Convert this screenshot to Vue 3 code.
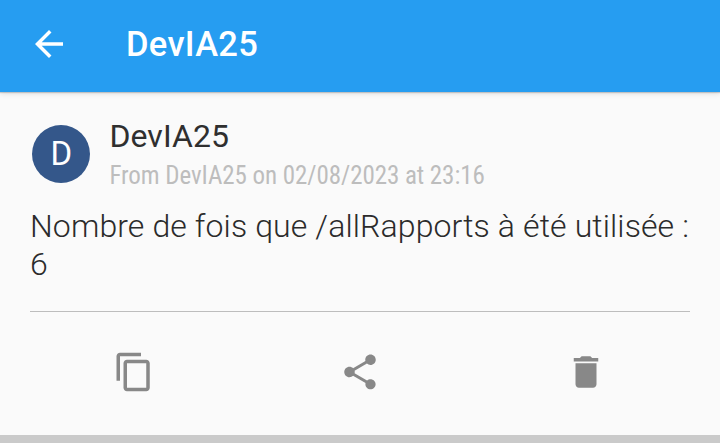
<script setup>
const title = 'DevIA25'
const meta = 'From DevIA25 on 02/08/2023 at 23:16'
const message = 'Nombre de fois que /allRapports à été utilisée : 6'
const actions = [
  { label: 'Copy', path: 'M16 1H4c-1.1 0-2 .9-2 2v14h2V3h12V1zm3 4H8c-1.1 0-2 .9-2 2v14c0 1.1.9 2 2 2h11c1.1 0 2-.9 2-2V7c0-1.1-.9-2-2-2zm0 16H8V7h11v14z' },
  { label: 'Share', path: 'M18 16.08c-.76 0-1.44.3-1.96.77L8.91 12.7c.05-.23.09-.46.09-.7s-.04-.47-.09-.7l7.05-4.11c.54.5 1.25.81 2.04.81 1.66 0 3-1.34 3-3s-1.34-3-3-3-3 1.34-3 3c0 .24.04.47.09.7L8.04 9.81C7.5 9.31 6.79 9 6 9c-1.66 0-3 1.34-3 3s1.34 3 3 3c.79 0 1.5-.31 2.04-.81l7.12 4.16c-.05.21-.08.43-.08.65 0 1.61 1.31 2.92 2.92 2.92 1.61 0 2.92-1.31 2.92-2.92s-1.31-2.92-2.92-2.92z' },
  { label: 'Delete', path: 'M6 19c0 1.1.9 2 2 2h8c1.1 0 2-.9 2-2V7H6v12zM19 4h-3.5l-1-1h-5l-1 1H5v2h14V4z' },
]
</script>

<template>
  <div class="screen">
    <header class="bar">
      <svg class="icon back" viewBox="0 0 24 24"><path d="M20 11H7.83l5.59-5.59L12 4l-8 8 8 8 1.41-1.41L7.83 13H20v-2z" /></svg>
      <h1 class="title">{{ title }}</h1>
    </header>
    <main class="body">
      <section class="sender">
        <div class="avatar">D</div>
        <div class="who">
          <div class="name">{{ title }}</div>
          <div class="meta">{{ meta }}</div>
        </div>
      </section>
      <p class="message">{{ message }}</p>
    </main>
    <nav class="actions">
      <button v-for="a in actions" :key="a.label" class="action" :aria-label="a.label">
        <svg class="icon" viewBox="0 0 24 24"><path :d="a.path" /></svg>
      </button>
    </nav>
    <footer class="foot"></footer>
  </div>
</template>

<style>
body { margin: 0; background: #fafafa; }
</style>

<style scoped>
.screen {
  box-sizing: border-box;
  display: flex;
  flex-direction: column;
  width: 720px;
  height: 443px;
  overflow: hidden;
  background: #fafafa;
  font-family: Roboto, sans-serif;
}
.bar {
  flex: none;
  display: flex;
  align-items: center;
  box-sizing: border-box;
  height: 92px;
  padding: 0 28px 5px;
  background: #269df1;
  box-shadow: 0 1px 1px rgba(0, 0, 0, 0.16), 0 2px 5px rgba(0, 0, 0, 0.1);
}
.icon { display: block; width: 42px; height: 42px; fill: #888; }
.back { fill: #fff; }
.title {
  margin: 0 0 0 56px;
  color: #fff;
  font-size: 34.5px;
  line-height: 40px;
  font-weight: 500;
  letter-spacing: 0.3px;
}
.body {
  flex: none;
  box-sizing: border-box;
  height: 220px;
  margin: 0 30px;
  border-bottom: 1px solid #bdbdbd;
  padding-top: 25px;
}
.sender { display: flex; height: 90px; }
.avatar {
  flex: none;
  width: 58px;
  height: 58px;
  margin: 8px 19px 0 2.4px;
  border-radius: 50%;
  background: #34578a;
  color: #fff;
  font-size: 33px;
  line-height: 57px;
  text-align: center;
}
.name {
  color: #2f2f2f;
  font-size: 32px;
  line-height: 38px;
  letter-spacing: 0.1px;
  white-space: nowrap;
}
.meta {
  margin-top: 6px;
  color: #bdbdbd;
  font-family: "Roboto Condensed", Roboto, sans-serif;
  font-stretch: 75%;
  font-size: 25px;
  line-height: 30px;
  letter-spacing: -0.07px;
  white-space: nowrap;
}
.message {
  margin: 0 -6px 0 0;
  color: #2b2b2b;
  font-size: 32px;
  line-height: 38px;
  font-weight: 300;
  letter-spacing: 0.11px;
}
.actions { flex: 1; display: flex; padding: 39px 21px 0; }
.action {
  flex: 1;
  display: flex;
  justify-content: center;
  align-items: flex-start;
  border: 0;
  padding: 0;
  background: none;
}
.foot { flex: none; height: 8px; background: #cacaca; }
</style>
